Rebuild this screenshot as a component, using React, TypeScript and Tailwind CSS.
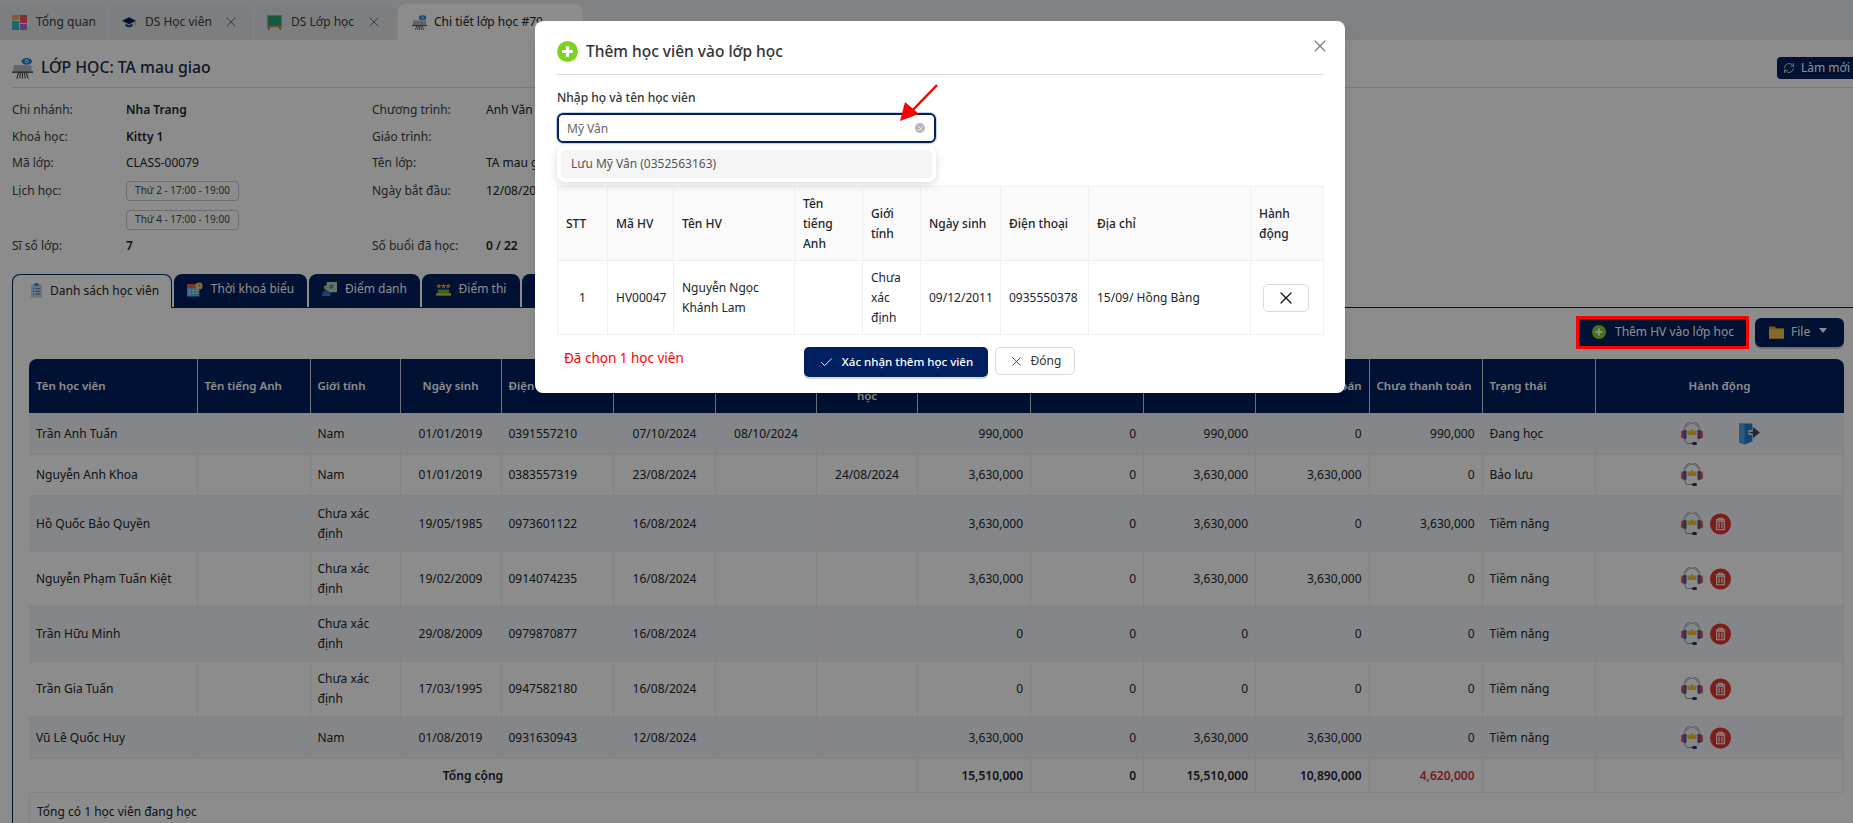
import React from "react";
import { Check, RefreshCw, X } from "lucide-react";

const NAVY = "bg-[#002060]";

const ProjectorIcon = ({ className }: { className: string }) => (
	<svg viewBox="0 0 22 22" className={className}>
		<rect x="1.500" y="8" width="19" height="8" rx="1" fill="#b4b9bf" />
		<rect x="0" y="14.500" width="22" height="1.800" fill="#59626b" />
		<path d="M7 16l-2 6M11 16v6M15 16l2 6M9 16l-1 6M13 16l1 6" stroke="#39434d" strokeWidth="1.100" />
		<ellipse cx="15.500" cy="4" rx="5.500" ry="3.600" fill="#1b8bd6" />
		<circle cx="15.500" cy="4" r="1.800" fill="#fff" />
		<circle cx="15.500" cy="4" r="0.900" fill="#134a78" />
	</svg>
);

const GridIcon = () => (
	<svg viewBox="0 0 15 15" className="w-[15px] h-[15px] shrink-0">
		<rect x="0" y="0" width="7" height="5" fill="#f2a65a" />
		<rect x="0" y="6" width="7" height="9" fill="#28c2c9" />
		<rect x="8" y="0" width="7" height="8" fill="#f2546b" />
		<rect x="8" y="9" width="7" height="6" fill="#a673d9" />
	</svg>
);

const CapIcon = () => (
	<svg viewBox="0 0 16 14" className="w-[14px] h-[13px] shrink-0">
		<path d="M0 5l8-4 8 4-8 4z" fill="#002060" />
		<path d="M4 8v3c2 2 6 2 8 0V8l-4 2z" fill="#2c3f66" />
		<path d="M15 5.500v5" stroke="#c9a227" strokeWidth="1" />
	</svg>
);

const BoardIcon = () => (
	<svg viewBox="0 0 16 16" className="w-[15px] h-[15px] shrink-0">
		<path d="M3 12l-1.500 4M13 12l1.500 4" stroke="#a9652a" strokeWidth="1.500" />
		<rect x="0" y="0" width="16" height="12.500" fill="#e0a02c" />
		<rect x="1.200" y="1.200" width="13.600" height="10" fill="#1fa37a" />
		<rect x="0" y="11.500" width="16" height="1.500" fill="#c98a2a" />
	</svg>
);

const ListDocIcon = () => (
	<svg viewBox="0 0 12 16" className="w-[11px] h-[15px] shrink-0">
		<rect x="0" y="1.500" width="12" height="14.500" rx="1" fill="#b9d7f2" />
		<rect x="3.500" y="0" width="5" height="3" rx="0.800" fill="#5a7fa8" />
		<path d="M2 6h1.500M5 6h5M2 9h1.500M5 9h5M2 12h1.500M5 12h5" stroke="#3d6d9c" strokeWidth="1" />
	</svg>
);

const CalendarIcon = () => (
	<svg viewBox="0 0 18 16" className="w-[16px] h-[15px] shrink-0">
		<rect x="0" y="2" width="14" height="14" rx="1" fill="#5db8e8" />
		<rect x="0" y="2" width="14" height="4" fill="#ee5a4f" />
		<path d="M2 9h2M6 9h2M10 9h2M2 12h2M6 12h2M10 12h2" stroke="#fff" strokeWidth="1.500" />
		<circle cx="13.500" cy="4" r="4" fill="#f4c26b" />
		<path d="M13.500 2v2h1.600" stroke="#7a5a20" strokeWidth="0.800" fill="none" />
	</svg>
);

const AttendanceIcon = () => (
	<svg viewBox="0 0 16 15" className="w-[15px] h-[14px] shrink-0">
		<rect x="5" y="0" width="11" height="11" fill="#b8d8c8" />
		<rect x="8" y="3" width="4" height="4" fill="#2eaa6c" />
		<circle cx="4.500" cy="6" r="2.500" fill="#e8b48c" />
		<path d="M0 15c0-5 2-6 4.500-6S9 10 9 15z" fill="#2c7fc4" />
	</svg>
);

const StarsIcon = () => (
	<svg viewBox="0 0 16 13" className="w-[15px] h-[13px] shrink-0">
		<path d="M3 0l.9 2h2l-1.600 1.300.6 2L3 4.100 1.100 5.300l.6-2L.1 2h2zM8 0l.9 2h2L9.300 3.300l.6 2L8 4.100 6.100 5.300l.6-2L5.100 2h2zM13 0l.9 2h2l-1.600 1.300.6 2L13 4.100l-1.900 1.200.6-2L10.100 2h2z" fill="#f5a623" />
		<rect x="2" y="6.500" width="12" height="4" fill="#6cb33f" />
		<rect x="0" y="10.500" width="16" height="2.500" fill="#e8c15a" />
	</svg>
);

const PlusCircle = ({ className }: { className: string }) => (
	<svg viewBox="0 0 20 20" className={className}>
		<circle cx="10" cy="10" r="10" fill="#7ed321" />
		<path d="M10 5v10M5 10h10" stroke="#fff" strokeWidth="3" />
	</svg>
);

const FolderIcon = () => (
	<svg viewBox="0 0 16 14" className="w-[15px] h-[14px] shrink-0">
		<path d="M0 1h6l2 2h8v11H0z" fill="#d9a520" />
		<rect x="0" y="4" width="16" height="10" fill="#f2c14e" />
	</svg>
);

const HeadsetIcon = () => (
	<svg viewBox="0 0 22 24" className="w-[22px] h-[24px] shrink-0">
		<path d="M3.500 10V8a7.500 7.500 0 0 1 15 0v2" stroke="#8a9099" strokeWidth="2" fill="none" />
		<path d="M3.500 10V8a7.500 7.500 0 0 1 15 0v2" stroke="#fff" strokeWidth="0.900" fill="none" />
		<rect x="0" y="8.500" width="4" height="8" rx="2" fill="#e8545f" />
		<rect x="2.500" y="8" width="3" height="9" rx="1.200" fill="#4c5a9c" />
		<rect x="18" y="8.500" width="4" height="8" rx="2" fill="#e8545f" />
		<rect x="16.500" y="8" width="3" height="9" rx="1.200" fill="#4c5a9c" />
		<path d="M6.500 7.500l2.300 2L11 6.500l2.200 3 2.300-2v5.500h-9z" fill="#f5c02e" />
		<path d="M4 17v1.500a3 3 0 0 0 3 3h4" stroke="#8a9099" strokeWidth="1" fill="none" />
		<rect x="11" y="20" width="5" height="3" rx="1.500" fill="#2c3550" />
	</svg>
);

const DoorIcon = () => (
	<svg viewBox="0 0 22 23" className="w-[21px] h-[23px] shrink-0">
		<path d="M0 1h14v19l-8 3-6-2z" fill="#1b7fd0" />
		<path d="M0 1l6 1.500V23l-6-2z" fill="#4da3e6" />
		<rect x="10" y="8" width="4" height="5" fill="#fff" />
		<path d="M11 10.500h6M15.500 6.500l5 4-5 4z" stroke="#3d4f5c" strokeWidth="1.800" fill="#3d4f5c" />
	</svg>
);

const TrashIcon = () => (
	<svg viewBox="0 0 22 22" className="w-[21px] h-[22px] shrink-0">
		<circle cx="11" cy="11" r="11" fill="#e5332a" />
		<path d="M6 6.500h10M9 6.500V5h4v1.500" stroke="#fff" strokeWidth="1.200" fill="none" />
		<path d="M7 8h8v9H7z" stroke="#fff" strokeWidth="1.200" fill="none" />
		<path d="M9.500 9.500v6M12.500 9.500v6" stroke="#fff" strokeWidth="1.200" />
	</svg>
);

const topTabs = [
	{ label: "Tổng quan", icon: <GridIcon />, w: "w-[107px]", close: false },
	{ label: "DS Học viên", icon: <CapIcon />, w: "w-[142px]", close: true },
	{ label: "DS Lớp học", icon: <BoardIcon />, w: "w-[140px]", close: true },
];

const innerTabs = [
	{ label: "Thời khoá biểu", icon: <CalendarIcon />, w: "w-[133px]" },
	{ label: "Điểm danh", icon: <AttendanceIcon />, w: "w-[111px]" },
	{ label: "Điểm thi", icon: <StarsIcon />, w: "w-[98px]" },
];

const info = [
	["Chi nhánh:", "Nha Trang", "Chương trình:", "Anh Văn", true],
	["Khoá học:", "Kitty 1", "Giáo trình:", "", true],
	["Mã lớp:", "CLASS-00079", "Tên lớp:", "TA mau giao", false],
];

const students = [
	{ h: "h-[42px]", name: "Trần Anh Tuấn", gender: "Nam", dob: "01/01/2019", phone: "0391557210", start: "07/10/2024", quit: "08/10/2024", hold: "", fee: "990,000", due: "990,000", paid: "0", unpaid: "990,000", status: "Đang học", extra: "door" },
	{ h: "h-[41px]", name: "Nguyễn Anh Khoa", gender: "Nam", dob: "01/01/2019", phone: "0383557319", start: "23/08/2024", quit: "", hold: "24/08/2024", fee: "3,630,000", due: "3,630,000", paid: "3,630,000", unpaid: "0", status: "Bảo lưu", extra: "" },
	{ h: "h-[56px]", name: "Hồ Quốc Bảo Quyền", gender: "Chưa xác định", dob: "19/05/1985", phone: "0973601122", start: "16/08/2024", quit: "", hold: "", fee: "3,630,000", due: "3,630,000", paid: "0", unpaid: "3,630,000", status: "Tiềm năng", extra: "trash" },
	{ h: "h-[55px]", name: "Nguyễn Phạm Tuấn Kiệt", gender: "Chưa xác định", dob: "19/02/2009", phone: "0914074235", start: "16/08/2024", quit: "", hold: "", fee: "3,630,000", due: "3,630,000", paid: "3,630,000", unpaid: "0", status: "Tiềm năng", extra: "trash" },
	{ h: "h-[55px]", name: "Trần Hữu Minh", gender: "Chưa xác định", dob: "29/08/2009", phone: "0979870877", start: "16/08/2024", quit: "", hold: "", fee: "0", due: "0", paid: "0", unpaid: "0", status: "Tiềm năng", extra: "trash" },
	{ h: "h-[55px]", name: "Trần Gia Tuấn", gender: "Chưa xác định", dob: "17/03/1995", phone: "0947582180", start: "16/08/2024", quit: "", hold: "", fee: "0", due: "0", paid: "0", unpaid: "0", status: "Tiềm năng", extra: "trash" },
	{ h: "h-[42px]", name: "Vũ Lê Quốc Huy", gender: "Nam", dob: "01/08/2019", phone: "0931630943", start: "12/08/2024", quit: "", hold: "", fee: "3,630,000", due: "3,630,000", paid: "3,630,000", unpaid: "0", status: "Tiềm năng", extra: "trash" },
];

const columns = [
	{ label: "Tên học viên", w: "w-[168.500px]", align: "text-left" },
	{ label: "Tên tiếng Anh", w: "w-[113px]", align: "text-left" },
	{ label: "Giới tính", w: "w-[90px]", align: "text-left" },
	{ label: "Ngày sinh", w: "w-[101px]", align: "text-center" },
	{ label: "Điện thoại", w: "w-[112.500px]", align: "text-left" },
	{ label: "Ngày vào lớp", w: "w-[102px]", align: "text-center" },
	{ label: "Ngày nghỉ", w: "w-[101px]", align: "text-center" },
	{ label: "Ngày bảo lưu học", w: "w-[101px]", align: "text-center" },
	{ label: "Học phí", w: "w-[113px]", align: "text-right" },
	{ label: "Giảm giá", w: "w-[113px]", align: "text-right" },
	{ label: "Phải thanh toán", w: "w-[112px]", align: "text-right" },
	{ label: "Đã thanh toán", w: "w-[113.500px]", align: "text-right" },
	{ label: "Chưa thanh toán", w: "w-[113px]", align: "text-left" },
	{ label: "Trạng thái", w: "w-[113px]", align: "text-left" },
	{ label: "Hành động", w: "w-[248px]", align: "text-center" },
];

const td = "px-[7px] pt-[1px] border-r border-b border-[#eeeeee] align-middle";
const modalTh = "px-2 font-medium text-left border-r border-b border-[#f0f0f0] leading-[20px]";
const modalTd = "px-2 border-r border-b border-[#f0f0f0] leading-[20px]";
const infoLabel = "w-[114px] shrink-0 text-[#3a3f44]";
const infoValue = "w-[246px] shrink-0";

export default function App() {
	return (
		<div className="relative w-[1853px] h-[823px] overflow-hidden bg-white text-[12px] text-[#212529] font-['Noto_Sans',sans-serif]">
			{/* thanh tab tren cung */}
			<div className="flex items-end h-[40px] bg-[#e9ecee] gap-[3px]">
				{topTabs.map((t) => (
					<div key={t.label} className={`${t.w} h-[36px] rounded-t-lg bg-[#e2e5e8] flex items-center gap-[9px] pl-[12px] pr-[13px] text-[12px] text-[#3c4043]`}>
						{t.icon}
						<span className="flex-1 whitespace-nowrap">{t.label}</span>
						{t.close && <X size={16} strokeWidth={1.500} className="text-[#6b6f73]" />}
					</div>
				))}
				<div className="w-[185px] h-[36px] rounded-t-lg bg-white flex items-center gap-[7px] pl-[14px] text-[12px]">
					<ProjectorIcon className="w-[15px] h-[15px] shrink-0" />
					<span className="whitespace-nowrap">Chi tiết lớp học #79</span>
				</div>
			</div>

			<div className="pl-[12px]">
				<div className="flex items-center justify-between h-[48px] pt-[8px] border-b border-[#dddddd]">
					<div className="flex items-center gap-[8px] text-[15.750px] font-medium text-[#1c2b4a]">
						<ProjectorIcon className="w-[21px] h-[22px]" />
						<span>LỚP HỌC: TA mau giao</span>
					</div>
					<button className={`${NAVY} -mr-[8px] w-[84px] h-[22px] rounded-[4px] text-white text-[12px] flex items-center gap-[6px] pl-[6px]`}>
						<RefreshCw size={12} strokeWidth={1.500} />
						<span className="whitespace-nowrap">Làm mới</span>
					</button>
				</div>

				{/* thong tin lop */}
				<div className="pt-[9px] w-[800px]">
					{info.map((row) => (
						<div key={String(row[0])} className="flex items-center h-[26.500px]">
							<span className={infoLabel}>{row[0]}</span>
							<span className={`${infoValue} ${row[4] ? "font-semibold" : ""}`}>{row[1]}</span>
							<span className={infoLabel}>{row[2]}</span>
							<span className="whitespace-nowrap">{row[3]}</span>
						</div>
					))}
					<div className="flex items-start h-[56px] pt-[4px]">
						<span className={`${infoLabel} leading-[20px]`}>Lịch học:</span>
						<div className={`${infoValue} flex flex-col gap-[9px]`}>
							<span className="w-[113px] h-[20px] flex items-center justify-center border border-[#c4c8cc] rounded-[4px] text-[10px] text-[#44494e] whitespace-nowrap">Thứ 2 - 17:00 - 19:00</span>
							<span className="w-[113px] h-[20px] flex items-center justify-center border border-[#c4c8cc] rounded-[4px] text-[10px] text-[#44494e] whitespace-nowrap">Thứ 4 - 17:00 - 19:00</span>
						</div>
						<span className={`${infoLabel} leading-[20px]`}>Ngày bắt đầu:</span>
						<span className="leading-[20px] whitespace-nowrap">12/08/2024</span>
					</div>
					<div className="flex items-center h-[27px]">
						<span className={infoLabel}>Sĩ số lớp:</span>
						<span className={`${infoValue} font-semibold`}>7</span>
						<span className={infoLabel}>Số buổi đã học:</span>
						<span className="font-semibold">0 / 22</span>
					</div>
				</div>

				{/* tab noi dung */}
				<div className="flex items-end gap-[2px] mt-[13px] h-[34px] relative z-10">
					<div className="w-[160px] h-[34px] bg-white border border-b-0 border-[#002060] rounded-t-lg flex items-center gap-[8px] pl-[18px] pb-[1px] -mb-[1px]">
						<ListDocIcon />
						<span className="whitespace-nowrap">Danh sách học viên</span>
					</div>
					{innerTabs.map((t) => (
						<div key={t.label} className={`${t.w} h-[33px] ${NAVY} rounded-t-lg text-white flex items-center justify-center gap-[8px] pb-[2px]`}>
							{t.icon}
							<span className="whitespace-nowrap">{t.label}</span>
						</div>
					))}
					<div className={`w-[120px] h-[33px] ${NAVY} rounded-t-lg`} />
				</div>

				<div className="border-l border-t border-[#002060] pl-[16px] pr-[10px] pt-[8px]">
					<div className="flex justify-end items-start gap-[6px] h-[42px] mb-[1px] -mr-[1px]">
						<button className={`${NAVY} w-[173px] h-[33px] text-white flex items-center gap-[9px] pl-[16px]`}>
							<PlusCircle className="w-[14px] h-[14px]" />
							<span className="whitespace-nowrap">Thêm HV vào lớp học</span>
						</button>
						<button className={`${NAVY} w-[89px] h-[29px] mt-[2px] rounded-[6px] text-white flex items-center pl-[14px] shadow-[0_2px_0_rgba(0,0,0,0.2)]`}>
							<FolderIcon />
							<span className="ml-[7px]">File</span>
							<span className="ml-[9px] mb-[4px] w-0 h-0 border-x-[4px] border-x-transparent border-t-[5px] border-t-white" />
						</button>
					</div>

					<table className="table-fixed w-[1814px] border-separate border-spacing-0 leading-[20px]">
						<thead>
							<tr className="h-[54px]">
								{columns.map((c, i) => (
									<th key={c.label} className={`${c.w} ${c.align} ${NAVY} text-white text-[11.500px] font-semibold px-[7px] border-r border-white/80 ${i === 0 ? "rounded-tl-lg" : ""} ${i === 14 ? "rounded-tr-lg border-r-0" : ""}`}>
										{c.label}
									</th>
								))}
							</tr>
						</thead>
						<tbody>
							{students.map((s, i) => (
								<tr key={s.name} className={`${s.h} ${i % 2 === 0 ? "bg-[#f2f5f9]" : "bg-white"}`}>
									<td className={td}>{s.name}</td>
									<td className={td}></td>
									<td className={td}>{s.gender}</td>
									<td className={`${td} text-center`}>{s.dob}</td>
									<td className={td}>{s.phone}</td>
									<td className={`${td} text-center`}>{s.start}</td>
									<td className={`${td} text-center`}>{s.quit}</td>
									<td className={`${td} text-center`}>{s.hold}</td>
									<td className={`${td} text-right`}>{s.fee}</td>
									<td className={`${td} text-right`}>0</td>
									<td className={`${td} text-right`}>{s.due}</td>
									<td className={`${td} text-right`}>{s.paid}</td>
									<td className={`${td} text-right`}>{s.unpaid}</td>
									<td className={td}>{s.status}</td>
									<td className={td}>
										<div className="flex items-center gap-[7px] pl-[78px]">
											<HeadsetIcon />
											{s.extra === "trash" && <TrashIcon />}
											{s.extra === "door" && <span className="w-[22px]" />}
											{s.extra === "door" && <DoorIcon />}
										</div>
									</td>
								</tr>
							))}
							<tr className="h-[34px] font-semibold">
								<td colSpan={8} className={`${td} text-center`}>Tổng cộng</td>
								<td className={`${td} text-right`}>15,510,000</td>
								<td className={`${td} text-right`}>0</td>
								<td className={`${td} text-right`}>15,510,000</td>
								<td className={`${td} text-right`}>10,890,000</td>
								<td className={`${td} text-right text-[#e0323c]`}>4,620,000</td>
								<td className={td}></td>
								<td className={td}></td>
							</tr>
							<tr className="h-[38px]">
								<td colSpan={15} className="px-[7px] border-l border-[#eeeeee]">Tổng có 1 học viên đang học</td>
							</tr>
						</tbody>
					</table>
				</div>
			</div>

			{/* lop phu cua modal */}
			<div className="absolute inset-0 z-20 bg-black/45" />

			<div className="absolute z-30 left-[535px] top-[21px] w-[810px] h-[372px] bg-white rounded-lg px-[22px] shadow-lg">
				<X size={20} strokeWidth={1.300} className="absolute right-[15px] top-[15px] text-[#777777]" />
				<div className="flex items-center gap-[8px] h-[54px] pt-[8px] border-b border-[#d9d9d9] w-[766px]">
					<PlusCircle className="w-[21px] h-[21px]" />
					<span className="text-[15.500px] font-medium text-[#333333]">Thêm học viên vào lớp học</span>
				</div>
				<label className="block mt-[14px] font-medium text-[#333333] leading-[18px]">Nhập họ và tên học viên</label>
				<div className="relative mt-[6px] w-[379px] h-[30px] border-2 border-[#002060] rounded-[6px] shadow-[0_0_0_1px_rgba(0,32,96,0.2)] flex items-center justify-between pl-[8px] pr-[9px]">
					<span className="text-[#666666] pt-[1px]">Mỹ Vân</span>
					<span className="w-[10px] h-[10px] rounded-full bg-[#b5b5b5] flex items-center justify-center">
						<X size={9} strokeWidth={2} className="text-white" />
					</span>
					<div className="absolute -left-[2px] top-[31px] w-[379px] h-[36px] bg-white rounded-lg shadow-[0_3px_10px_rgba(0,0,0,0.14)] p-[4px] z-10">
						<div className="h-[28px] rounded-[4px] bg-[#f5f5f5] flex items-center pl-[10px] text-[#555555]">Lưu Mỹ Vân (0352563163)</div>
					</div>
				</div>

				<table className="table-fixed w-[766px] mt-[43px] border-separate border-spacing-0 border-t border-l border-[#f0f0f0]">
					<thead>
						<tr className="h-[74px] bg-[#fafafa]">
							<th className={`${modalTh} w-[50px]`}>STT</th>
							<th className={`${modalTh} w-[66px]`}>Mã HV</th>
							<th className={`${modalTh} w-[121px]`}>Tên HV</th>
							<th className={`${modalTh} w-[68px]`}>Tên tiếng Anh</th>
							<th className={`${modalTh} w-[58px]`}>Giới tính</th>
							<th className={`${modalTh} w-[80px]`}>Ngày sinh</th>
							<th className={`${modalTh} w-[88px]`}>Điện thoại</th>
							<th className={`${modalTh} w-[162px]`}>Địa chỉ</th>
							<th className={`${modalTh} w-[73px]`}>Hành động</th>
						</tr>
					</thead>
					<tbody>
						<tr className="h-[74px]">
							<td className={`${modalTd} text-center`}>1</td>
							<td className={modalTd}>HV00047</td>
							<td className={modalTd}>Nguyễn Ngọc Khánh Lam</td>
							<td className={modalTd}></td>
							<td className={modalTd}>Chưa xác định</td>
							<td className={modalTd}>09/12/2011</td>
							<td className={modalTd}>0935550378</td>
							<td className={modalTd}>15/09/ Hồng Bàng</td>
							<td className={modalTd}>
								<button className="w-[46px] h-[28px] ml-[4px] border border-[#d9d9d9] rounded-[5px] flex items-center justify-center text-[#111111]">
									<X size={20} strokeWidth={1.500} />
								</button>
							</td>
						</tr>
					</tbody>
				</table>

				<div className="flex items-start mt-[12px] relative">
					<span className="w-[247px] pl-[7px] text-[13.500px] text-[#ff0000] leading-[22px]">Đã chọn 1 học viên</span>
					<button className={`${NAVY} w-[184px] h-[30px] rounded-[5px] text-white text-[11.500px] font-medium flex items-center justify-center gap-[8px] shadow-[0_2px_0_rgba(0,0,0,0.15)]`}>
						<Check size={15} strokeWidth={1.500} />
						<span>Xác nhận thêm học viên</span>
					</button>
					<button className="ml-[7px] w-[80px] h-[28px] border border-[#d9d9d9] rounded-[5px] flex items-center justify-center gap-[7px] text-[#333333]">
						<X size={15} strokeWidth={1.400} />
						<span>Đóng</span>
					</button>
				</div>
			</div>

			{/* khung do va mui ten chu thich ve tren anh */}
			<div className="absolute z-40 left-[1576px] top-[316px] w-[173px] h-[33px] border-[3px] border-[#ff0000]" />
			<svg viewBox="0 0 40 38" className="absolute z-40 left-[899px] top-[84px] w-[40px] h-[38px]">
				<path d="M38 1L10 30" stroke="#ff0000" strokeWidth="2.500" fill="none" />
				<path d="M1 37L6 18L20 30z" fill="#ff0000" />
			</svg>
		</div>
	);
}
